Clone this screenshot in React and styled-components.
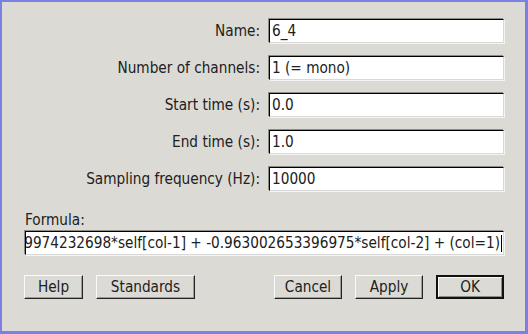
import React from "react";
import styled, {createGlobalStyle} from "styled-components";

const GlobalStyle = createGlobalStyle`
    html, body {
        margin: 0;
        padding: 0;
        background: #dcdad5;
    }
`;

const Window = styled.div`
    box-sizing: border-box;
    width: 528px;
    height: 334px;
    background: #dcdad5;
    border-style: solid;
    border-color: #7b80e6;
    border-width: 2px 3px 3px 2px;
    font-family: "DejaVu Sans Condensed", "DejaVu Sans", sans-serif;
    font-size: 15.2px;
    color: #202020;
    display: flex;
    flex-direction: column;
    padding: 17px 21px 0 0;
`;

const Fields = styled.div`
    display: grid;
    grid-template-columns: 1fr 235px;
    column-gap: 9px;
    row-gap: 13px;
    align-items: center;
`;

const Label = styled.div`
    text-align: right;
    white-space: nowrap;
`;

const Field = styled.div`
    box-sizing: border-box;
    height: 24px;
    background: #fff;
    border-style: solid;
    border-width: 1px;
    border-color: #000 #d8d8d8 #d8d8d8 #000;
    box-shadow: -1px -1px 0 #8e8c88, 1px 1px 0 #f4f4f2;
    display: flex;
    align-items: center;
    justify-content: ${p => (p.$end ? "flex-end" : "flex-start")};
    padding: 0 ${p => (p.$end ? "1px" : "2px")};
    overflow: hidden;
    white-space: nowrap;
    line-height: 20px;
`;

const Caret = styled.span`
    display: inline-block;
    width: 1px;
    height: 17px;
    background: #000;
    margin-left: 1px;
    flex: none;
`;

const FormulaBlock = styled.div`
    display: flex;
    flex-direction: column;
    gap: 2px;
    margin: 21px 0 0 23px;
`;

const FormulaLabel = styled.div`
    line-height: 17px;
`;

const ButtonBar = styled.div`
    display: flex;
    align-items: center;
    margin: 20px 0 0 22px;
`;

const Spacer = styled.div`
    flex: 1;
`;

const Button = styled.button`
    box-sizing: border-box;
    height: 24px;
    width: ${p => p.$w}px;
    margin-left: ${p => (p.$first ? 0 : 13)}px;
    padding: 0;
    font: inherit;
    color: #202020;
    background: #dcdad5;
    border-style: solid;
    border-width: ${p => (p.$default ? "2px" : "1px")};
    border-color: ${p => (p.$default ? "#111" : "#fafafa #222 #222 #fafafa")};
    box-shadow: ${p => (p.$default
        ? "inset 1px 1px 0 #fafafa, inset -1px -1px 0 #8e8c88"
        : "inset -1px -1px 0 #a09e9a")};
    line-height: 20px;
`;

const rows = [
    ["Name:", "6_4"],
    ["Number of channels:", "1 (= mono)"],
    ["Start time (s):", "0.0"],
    ["End time (s):", "1.0"],
    ["Sampling frequency (Hz):", "10000"],
];

export default function App() {
    return (
        <React.Fragment>
            <GlobalStyle/>
            <Window>
                <Fields>
                    {rows.map(([label, value]) => (
                        <React.Fragment key={label}>
                            <Label>{label}</Label>
                            <Field>{value}</Field>
                        </React.Fragment>
                    ))}
                </Fields>
                <FormulaBlock>
                    <FormulaLabel>Formula:</FormulaLabel>
                    <Field $end>
                        <span>if col = 1 then 0 else 1.859974232698*self[col-1] + -0.963002653396975*self[col-2] + (col=1)</span>
                        <Caret/>
                    </Field>
                </FormulaBlock>
                <ButtonBar>
                    <Button $first $w={59}>Help</Button>
                    <Button $w={99}>Standards</Button>
                    <Spacer/>
                    <Button $first $w={68}>Cancel</Button>
                    <Button $w={68}>Apply</Button>
                    <Button $w={68} $default>OK</Button>
                </ButtonBar>
            </Window>
        </React.Fragment>
    );
}
